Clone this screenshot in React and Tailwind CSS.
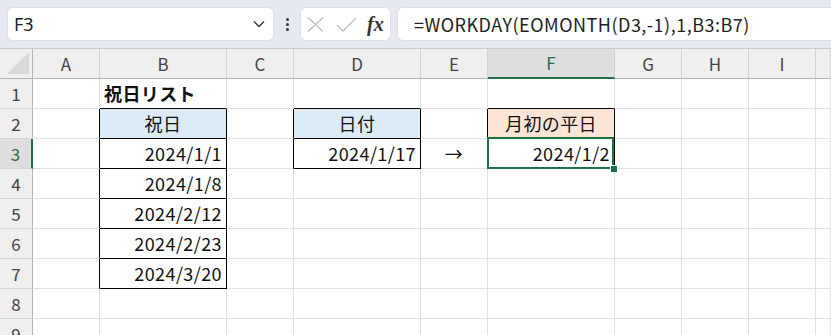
import React from "react";

const cols = ["A", "B", "C", "D", "E", "F", "G", "H", "I", "J"];
const rows = [1, 2, 3, 4, 5, 6, 7, 8, 9];

// cell contents: value, align, fill
const cells = {
  B1: { v: "祝日リスト", bold: true },
  B2: { v: "祝日", center: true, fill: "blue" },
  B3: { v: "2024/1/1", right: true },
  B4: { v: "2024/1/8", right: true },
  B5: { v: "2024/2/12", right: true },
  B6: { v: "2024/2/23", right: true },
  B7: { v: "2024/3/20", right: true },
  D2: { v: "日付", center: true, fill: "blue" },
  D3: { v: "2024/1/17", right: true },
  E3: { v: "→", center: true },
  F2: { v: "月初の平日", center: true, fill: "peach" },
  F3: { v: "2024/1/2", right: true },
};

const boxed = new Set(["B2", "B3", "B4", "B5", "B6", "B7", "D2", "D3", "F2", "F3"]);
const isBoxed = (r, c) => c >= 0 && c < cols.length && boxed.has(cols[c] + r);

const NameBox = () => (
  <div className="flex items-center w-[267px] h-[34px] bg-white rounded-md border border-[#dcdfe6] pl-[6px] pr-[8px]">
    <span className="flex-1 text-[18px] text-[#222]" style={{ fontFamily: '"Noto Sans", sans-serif' }}>
      F3
    </span>
    <svg width="12" height="8" viewBox="0 0 12 8">
      <path d="M1 1.5 L6 6.5 L11 1.5" fill="none" stroke="#333" strokeWidth="1.3" />
    </svg>
  </div>
);

const FuncBox = () => (
  <div className="flex items-center w-[91px] h-[34px] bg-white rounded-md border border-[#dcdfe6] pl-[6px] gap-[12px]">
    <svg width="17" height="15" viewBox="0 0 17 15">
      <path d="M1 0.5 L16 14.5 M16 0.5 L1 14.5" stroke="#bdbdbd" strokeWidth="1.3" />
    </svg>
    <svg width="21" height="15" viewBox="0 0 21 15">
      <path d="M1 8 L7 14 L20 1" fill="none" stroke="#bdbdbd" strokeWidth="1.3" />
    </svg>
    <span
      className="text-[20px] font-bold italic text-[#333] leading-none -ml-[2px]"
      style={{ fontFamily: '"Liberation Serif", "DejaVu Serif", serif' }}
    >
      fx
    </span>
  </div>
);

const Toolbar = () => (
  <div className="flex items-center h-[48px] bg-[#e6e9f0] pl-[7px] pt-[4px] pb-[4px]">
    <NameBox />
    <div className="w-[26px] flex flex-col items-center gap-[2px]">
      <span className="w-[3px] h-[3px] bg-[#333] rounded-full" />
      <span className="w-[3px] h-[3px] bg-[#333] rounded-full" />
      <span className="w-[3px] h-[3px] bg-[#333] rounded-full" />
    </div>
    <FuncBox />
    <div className="flex-1 h-[34px] bg-white rounded-l-md border border-r-0 border-[#dcdfe6] ml-[6px] flex items-center pl-[16px]">
      <span className="text-[18px] text-[#222] tracking-[0.5px]">=WORKDAY(EOMONTH(D3,-1),1,B3:B7)</span>
    </div>
  </div>
);

const Cell = ({ r, c }) => {
  const id = cols[c] + r;
  const d = cells[id];
  const rightBlack = isBoxed(r, c) || isBoxed(r, c + 1);
  const bottomBlack = isBoxed(r, c) || isBoxed(r + 1, c);
  const fill =
    d && d.fill === "blue" ? "bg-[#ddebf7]" : d && d.fill === "peach" ? "bg-[#fce4d6]" : "bg-white";
  return (
    <div
      className={`relative h-[30px] border-r border-b flex items-center px-[4px] text-[18px] text-[#111] whitespace-nowrap tracking-[0.4px] ${fill} ${
        rightBlack ? "border-r-[#000000]" : "border-r-[#e1e1e1]"
      } ${bottomBlack ? "border-b-[#000000]" : "border-b-[#e1e1e1]"} ${
        d && d.right ? "justify-end" : d && d.center ? "justify-center" : "justify-start"
      } ${d && d.bold ? "font-bold" : ""}`}
    >
      {d ? d.v : null}
      {id === "F3" && (
        <>
          <div className="absolute z-10 top-[-2px] left-[-1px] w-[127px] h-[32px] border-2 border-[#1e7145] pointer-events-none" />
          <div className="absolute z-20 top-[26px] left-[122px] w-[8px] h-[8px] bg-[#1e7145] border border-white" />
        </>
      )}
    </div>
  );
};

export default function App() {
  return (
    <div
      className="w-[831px] h-[335px] overflow-hidden bg-white"
      style={{ fontFamily: '"Noto Sans CJK JP", "Noto Sans", sans-serif' }}
    >
      <Toolbar />
      <div className="grid grid-cols-[33px_67px_127px_67px_127px_67px_127px_67px_67px_67px_1fr] border-t border-[#c8cbd1]">
        {/* header row */}
        <div className="h-[30px] bg-[#efefef] border-r border-b border-r-[#b5b5b5] border-b-[#b5b5b5] flex items-end justify-end pr-[3px] pb-[4px]">
          <svg width="22" height="22" viewBox="0 0 22 22">
            <path d="M22 0 L22 22 L0 22 Z" fill="#d9d9d9" />
          </svg>
        </div>
        {cols.map((c) =>
          c === "F" ? (
            <div
              key={c}
              className="h-[30px] bg-[#dedede] border-r border-r-[#d0d0d0] border-b-2 border-b-[#1e7145] flex items-center justify-center text-[17px] text-[#1e7145]"
            >
              {c}
            </div>
          ) : (
            <div
              key={c}
              className="h-[30px] bg-[#efefef] border-r border-b border-r-[#d4d4d4] border-b-[#b5b5b5] flex items-center justify-center text-[17px] text-[#444]"
            >
              {c === "J" ? "" : c}
            </div>
          )
        )}
        {rows.map((r) => (
          <React.Fragment key={r}>
            {r === 3 ? (
              <div className="h-[30px] bg-[#dedede] border-r-2 border-b border-r-[#1e7145] border-b-[#d4d4d4] flex items-center justify-center text-[17px] text-[#1e7145]">
                {r}
              </div>
            ) : (
              <div className="h-[30px] bg-[#efefef] border-r border-b border-r-[#b5b5b5] border-b-[#d4d4d4] flex items-center justify-center text-[17px] text-[#444]">
                {r}
              </div>
            )}
            {cols.map((c, ci) => (
              <Cell key={c} r={r} c={ci} />
            ))}
          </React.Fragment>
        ))}
      </div>
    </div>
  );
}
